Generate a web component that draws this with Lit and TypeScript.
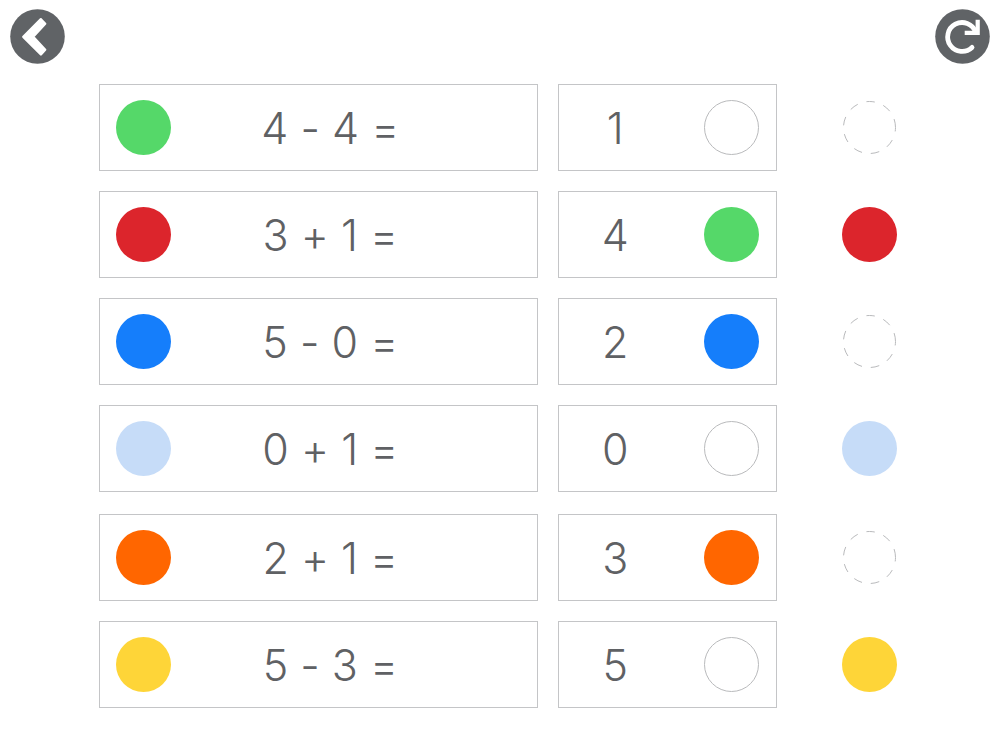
import { LitElement, html, css, svg, nothing } from "lit";
import { customElement, property } from "lit/decorators.js";
import { classMap } from "lit/directives/class-map.js";

type Tone = "green" | "red" | "blue" | "sky" | "orange" | "yellow";

interface Row {
  tone: Tone;
  problem: string;
  answer: string;
  placed?: Tone;
  spare?: Tone;
}

const GROUPS: Row[][] = [
  [
    { tone: "green", problem: "4 - 4 =", answer: "1" },
    { tone: "red", problem: "3 + 1 =", answer: "4", placed: "green", spare: "red" },
    { tone: "blue", problem: "5 - 0 =", answer: "2", placed: "blue" },
    { tone: "sky", problem: "0 + 1 =", answer: "0", spare: "sky" },
  ],
  [
    { tone: "orange", problem: "2 + 1 =", answer: "3", placed: "orange" },
    { tone: "yellow", problem: "5 - 3 =", answer: "5", spare: "yellow" },
  ],
];

@customElement("color-dot")
export class ColorDot extends LitElement {
  @property() tone?: Tone;
  @property({ type: Boolean }) dashed = false;

  static styles = css`
    :host {
      display: block;
      width: 55px;
      height: 55px;
    }
    .dot {
      display: block;
      width: 100%;
      height: 100%;
      fill: none;
      stroke: #b9babc;
    }
    .green { fill: #55d869; stroke: none; }
    .red { fill: #dc252c; stroke: none; }
    .blue { fill: #157efb; stroke: none; }
    .sky { fill: #c6dcf8; stroke: none; }
    .orange { fill: #ff6600; stroke: none; }
    .yellow { fill: #fed538; stroke: none; }
  `;

  render() {
    const shape = this.tone
      ? svg`<circle cx="27.5" cy="27.5" r="27.5"></circle>`
      : this.dashed
        ? svg`<circle cx="27.5" cy="27.5" r="26" pathLength="360" stroke-dasharray="19 20" stroke-dashoffset="10"></circle>`
        : svg`<circle cx="27.5" cy="27.5" r="27"></circle>`;
    const classes = { dot: true, [this.tone ?? "empty"]: true };
    return html`<svg class=${classMap(classes)} viewBox="0 0 55 55" aria-hidden="true">${shape}</svg>`;
  }
}

@customElement("app-root")
export class AppRoot extends LitElement {
  static styles = css`
    :host {
      display: block;
      min-height: 100vh;
      background: #fff;
      color: #5f6164;
      font-family: Inter, "Liberation Sans", sans-serif;
      font-weight: 300;
      font-feature-settings: "calt" 0;
    }
    button {
      display: block;
      flex: none;
      margin: 0;
      padding: 0;
      border: 0;
      border-radius: 50%;
      background: none;
      cursor: pointer;
    }
    .bar {
      display: flex;
      justify-content: space-between;
      padding: 9px 10px 20px;
    }
    .icon {
      display: block;
      width: 55px;
      height: 55px;
    }
    .board {
      display: grid;
      gap: 22px;
      padding: 0 57px 40px 99px;
    }
    .group {
      display: grid;
      gap: 20px;
    }
    .row {
      display: grid;
      grid-template-columns: 2fr 1fr 146px;
      column-gap: 20px;
      align-items: center;
    }
    .card {
      display: flex;
      align-items: center;
      box-sizing: border-box;
      height: 87px;
      border: 1px solid #c4c5c7;
      font-size: 43px;
      line-height: 52px;
    }
    .problem {
      padding: 0 47px 0 16px;
    }
    .answer {
      padding-right: 17px;
      gap: 32px;
    }
    .text {
      flex: 1;
      text-align: center;
      white-space: nowrap;
    }
    .tray {
      justify-self: center;
    }
  `;

  private renderRow(row: Row) {
    return html`
      <div class="row">
        <div class="card problem">
          <color-dot tone=${row.tone}></color-dot>
          <span class="text">${row.problem}</span>
        </div>
        <div class="card answer">
          <span class="text">${row.answer}</span>
          <button type="button" aria-label=${`Answer ${row.answer}: ${row.placed ?? "empty"}`}>
            <color-dot tone=${row.placed ?? nothing}></color-dot>
          </button>
        </div>
        <button class="tray" type="button" aria-label=${row.spare ?? "Empty"}>
          <color-dot dashed tone=${row.spare ?? nothing}></color-dot>
        </button>
      </div>
    `;
  }

  render() {
    return html`
      <header class="bar">
        <button type="button" aria-label="Back">
          <svg class="icon" viewBox="0 0 55 55" aria-hidden="true">
            <circle cx="27.5" cy="27.5" r="27.3" fill="#606366"></circle>
            <path
              d="M13.3 27.8 L30.9 10.2 L35.2 14.8 L23.2 27.8 L35.2 40.8 L30.9 45.4 Z"
              fill="#fff" stroke="#fff" stroke-width="2.4" stroke-linejoin="round"
            ></path>
          </svg>
        </button>
        <button type="button" aria-label="Restart">
          <svg class="icon" viewBox="0 0 55 55" aria-hidden="true">
            <circle cx="27.5" cy="27.5" r="27.3" fill="#606366"></circle>
            <g fill="none" stroke="#fff">
              <path d="M37 38.4 A14.4 14.4 0 1 1 40.6 23" stroke-width="4.8" stroke-linecap="round"></path>
              <path d="M42.7 10.8 V23.8 H29.7" stroke-width="4.2"></path>
            </g>
          </svg>
        </button>
      </header>
      <main class="board">
        ${GROUPS.map((rows) => html`<section class="group">${rows.map((row) => this.renderRow(row))}</section>`)}
      </main>
    `;
  }
}
